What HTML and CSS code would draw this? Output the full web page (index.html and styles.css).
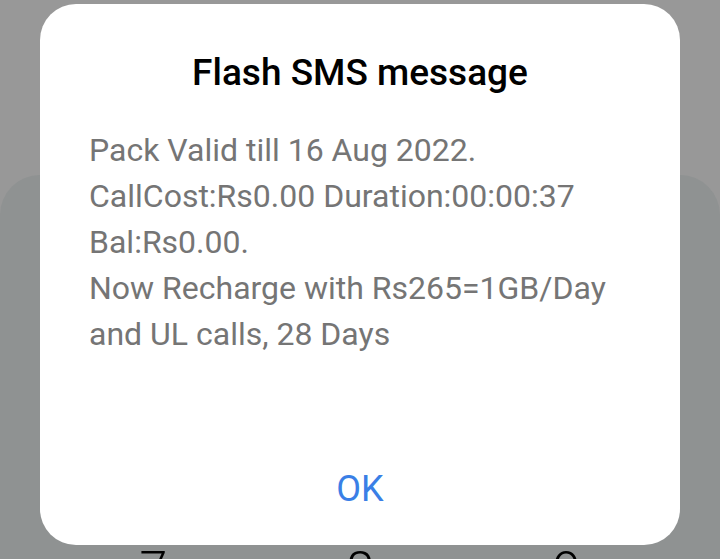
FILE: index.html
```html
<!DOCTYPE html>
<html lang="en">
<head>
<meta charset="utf-8">
<title>Flash SMS message</title>
<link rel="stylesheet" href="styles.css">
</head>
<body>
<div class="screen">
  <div class="keypad">
    <div class="row"><span>7</span><span>8</span><span>9</span></div>
  </div>
</div>
<div class="dialog" role="dialog">
  <h1 class="title">Flash SMS message</h1>
  <p class="message">Pack Valid till 16 Aug 2022.<br>CallCost:Rs0.00 Duration:00:00:37<br>Bal:Rs0.00.<br>Now Recharge with Rs265=1GB/Day<br>and UL calls, 28 Days</p>
  <div class="actions"><button class="ok">OK</button></div>
</div>
</body>
</html>
```
FILE: styles.css
```css
html, body {
  margin: 0;
  padding: 0;
  height: 100%;
  overflow: hidden;
}
body {
  background: #989898;
  font-family: Roboto, "Noto Sans", sans-serif;
}
.screen {
  height: 559px;
  box-sizing: border-box;
  padding-top: 175px;
  overflow: hidden;
}
.keypad {
  background: #8f9292;
  border-radius: 40px 40px 0 0;
  height: 384px;
  padding-top: 340px;
  box-sizing: border-box;
  overflow: hidden;
}
.row {
  display: grid;
  grid-template-columns: 1fr 1fr 1fr;
  padding: 0 50px;
  height: 110px;
  line-height: 110px;
  text-align: center;
  font-size: 50px;
  font-weight: 300;
  color: #000;
}
.dialog {
  position: fixed;
  left: 40px;
  top: 4px;
  width: 640px;
  height: 541px;
  box-sizing: border-box;
  background: #fff;
  border-radius: 36px;
  display: flex;
  flex-direction: column;
  padding: 49px 49px 36px;
}
.title {
  margin: 0;
  font-size: 37px;
  line-height: 40px;
  font-weight: 500;
  text-align: center;
  color: #000;
}
.message {
  margin: 34px 0 0;
  font-size: 32px;
  line-height: 46px;
  color: #757575;
  flex: 1;
}
.actions {
  display: flex;
  justify-content: center;
}
.ok {
  border: 0;
  background: none;
  padding: 0;
  font-family: inherit;
  font-size: 36px;
  line-height: 40px;
  color: #3a7fe6;
}
```
